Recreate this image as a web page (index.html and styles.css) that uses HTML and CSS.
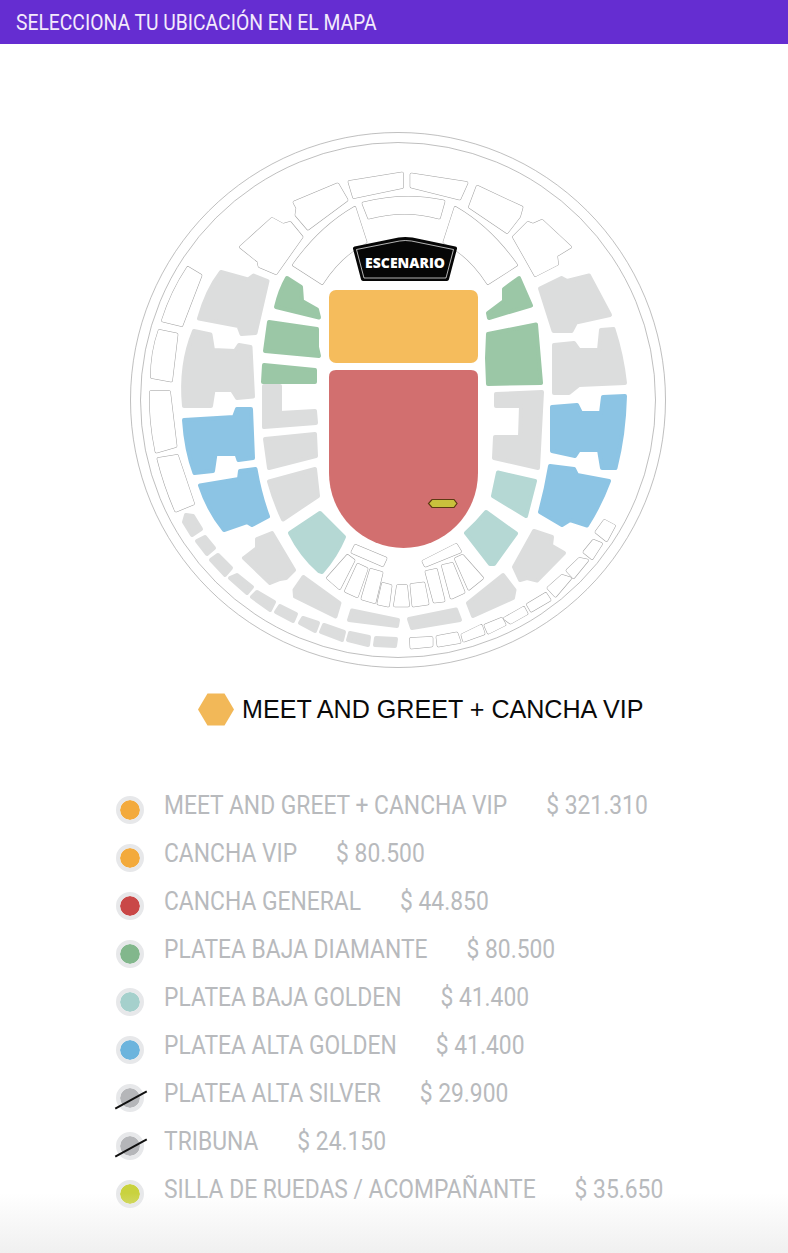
FILE: index.html
```html
<!DOCTYPE html>
<html lang="es">
<head>
<meta charset="utf-8">
<title>Selecciona tu ubicación en el mapa</title>
<link rel="stylesheet" href="styles.css">
</head>
<body>
<header class="topbar"><span class="title">SELECCIONA TU UBICACIÓN EN EL MAPA</span></header>

<svg class="map" viewBox="0 44 788 640" xmlns="http://www.w3.org/2000/svg" aria-label="Mapa del estadio">
  <circle class="ring" cx="398" cy="400" r="267.5"/>
  <circle class="ring" cx="398" cy="400" r="257.5"/>

  <defs>
    <g id="seats">
      <path d="M349.5 182 L402 173.5 L402 187 L354 197Z"/>
      <path d="M294.5 202.5 L337.5 184.5 L346.5 200 L308 228.5 L296.5 215 L297.5 208Z"/>
      <path d="M272 219 L283 225 L290 223 L301.5 237 L276 273 L259.5 266 L258.5 261 L241 247Z"/>
      <path d="M363.5 203.5 Q405 193 443.5 201.5 L439 217.5 Q405 208 369 217.5Z"/>
      <path d="M354.5 208 L365.5 242 Q340 255 322 283 L294 265 Q320 228 354.5 208Z"/>
      <path d="M455.5 208 L444.5 242 Q470 255 488 283 L516 265 Q490 228 455.5 208Z"/>
      <path d="M411.5 174.5 L466.5 183 L459.5 198.5 L411.5 186.5Z"/>
      <path d="M477.5 187 L521.5 207.5 L519 216.5 L507 232 L470 207Z"/>
      <path d="M514 237 L528 223 L533 225 L542 221 L570 247 L556 255.5 L557 264 L535.5 275Z"/>
      <path d="M188 268 L200.5 275.5 L181.5 325 L163 320.5 Q172 292 188 268Z"/>
      <path d="M159.5 331 L176.5 334.5 L171 380.5 L152 377 Q152 352 159.5 331Z"/>
      <path d="M151 392 L169 392 L175.5 446 L156.5 451.5 Q150 420 151 392Z"/>
      <path d="M158.5 459 L177 456 L193 503.5 L176 510.5 Q165 485 158.5 459Z"/>
      <path d="M355.5 546 L385.5 558.5 L382.5 565 L352.5 552Z"/>
      <path d="M347.5 556 L353.5 560.5 L339.5 588 L328 578Z"/>
      <path d="M358 565 L366.5 569 L357 596 L346 591Z"/>
      <path d="M371 570 L381.5 573 L374.5 602 L362.5 598.5Z"/>
      <path d="M383 584 L390.5 586 L388 605.5 L378.5 603.5Z"/>
      <path d="M398 586 L406 586 L408 605.5 L395 605.5Z"/>
      <path d="M411.5 585 L423.5 583.5 L427.5 603.5 L413.5 605.5Z"/>
      <path d="M426.5 572 L436 570 L443.5 600.5 L434.5 601.5Z"/>
      <path d="M443 566 L452 564 L463.5 592 L451.5 597.5Z"/>
      <path d="M456 559 L462.5 556 L482 578 L469 588.5Z"/>
      <path d="M423.5 561.5 L456 545 L460 551.5 L425.5 565.5Z"/>
      <path d="M411 639 L431.5 638 L431.5 645.5 L411.5 647.5Z"/>
      <path d="M437.5 637 L456.5 633.5 L459.5 642 L438.5 645.5Z"/>
      <path d="M462.5 635 L481 626 L483.5 633.5 L464 640.5Z"/>
      <path d="M485.5 625.5 L501.5 619 L504.5 624.5 L488.5 632.5Z"/>
      <path d="M505 618.5 L523.5 608 L526.5 613.5 L510.5 622.5Z"/>
      <path d="M528 604.5 L545.5 594 L549.5 600 L531.5 610.5Z"/>
      <path d="M548.5 588 L562 576 L570 578.5 L555.5 595.5Z"/>
      <path d="M567.5 570.5 L579.5 559 L587 560.5 L573.5 577Z"/>
      <path d="M584.5 552 L593.5 541 L601 544 L592 558Z"/>
      <path d="M596.5 532 L604.5 521 L614 526 L606.5 540Z"/>
    </g>
  </defs>
  <use href="#seats" class="seat-line"/>
  <use href="#seats" class="seat-fill"/>

  <g class="zone grey">
    <path d="M221 272 L248 279.5 L253.5 275.5 L267.5 281 L255.5 333 L241.5 334 L238.5 326 L199 318.5 Q207 290 221 272Z"/>
    <path d="M194 331 L210.5 334.5 L213 350 L235 351 L239 345 L250.5 347 L253 396.5 L237 398 L232 390 L213.5 390 L211 406 L184 406 Q180 365 194 331Z"/>
    <path d="M264 386 L280 386 L280 413 L315 411 L316 423 L264 427Z"/>
    <path d="M265 439 L315 434 L316 456 L269 468Z"/>
    <path d="M269 481.5 L315 469 L318 496 L283 519.5 Q274 500 269 481.5Z"/>
    <path d="M272 533 L294 570 L286 578 L280 579 L270 583 L244 558 L257 548 L257 539Z"/>
    <path d="M303.5 577 L339.5 603 L335.5 616.5 L295 596.5 L294.5 590Z"/>
    <path d="M352 610.5 L398 620 L397 626 L349 620Z"/>
    <path d="M186 515 L193 516 L201 529 L192 535 L184 522Z"/>
    <path d="M197 541 L205 537 L214 548 L207 554Z"/>
    <path d="M211 560 L218 555 L231 568 L225 575Z"/>
    <path d="M230 578 L237 575 L252 587 L247 593Z"/>
    <path d="M252 597 L257 592 L274 602 L270 610Z"/>
    <path d="M276 612 L280 606 L296 614 L293 621Z"/>
    <path d="M300 623 L303 618 L318 623 L315 631Z"/>
    <path d="M321 632 L324 625 L344 632 L342 640Z"/>
    <path d="M348 640 L350 633 L369 637 L368 645Z"/>
    <path d="M375 645 L376 638 L396 639 L395 646Z"/>
    <path d="M589 275.5 L610 315 L576 322.5 L571.5 331 L553.5 331 L540 288.5 L561.5 278 L567 281Z"/>
    <path d="M554 345 L574 343 L579 350 L599 350 L601 330 L613.5 329 Q622 355 625 383 L579 385 L569 393 L554 393Z"/>
    <path d="M496 394 L542 392 L538 468 L494 458 L495 437 L520 437 L521 406 L496 406Z"/>
    <path d="M409 619 L456 609.5 L460 620 L412 628Z"/>
    <path d="M468 603 L503 575 L514.5 590 L513 598 L473 616Z"/>
    <path d="M534 531 L552 537 L551 545.5 L564 553 L537 580.5 L527 578 L520 580 L514 567Z"/>
  </g>
  <g class="zone green">
    <path d="M287 278 L301 287 L302 301 L317 309.5 L319 317.5 L276 307 Q280 290 287 278Z"/>
    <path d="M269 322 L317 329 L317 347 L319 356 L265 351Z"/>
    <path d="M264 365 L315 370 L315 382 L263 382Z"/>
    <path d="M519 278 L531 305.5 L489 318 L488 313 L504 301 L504 289Z"/>
    <path d="M536 324.5 L541 383 L488 384 L487 358 L488 334Z"/>
  </g>
  <g class="zone blue">
    <path d="M184 420 L234 417 L237 409 L251 409 L253 458 L238.5 460 L236.5 454 L215.5 454 L213 471 L194.5 473 Q186 450 184 420Z"/>
    <path d="M200 485.5 L239 479 L240 471 L255.5 469 Q260 495 268 516.5 L252 525 L247 522 L224 530 Q208 510 200 485.5Z"/>
    <path d="M552 407 L577 405 L581 413 L601 413 L603 397 L625 396 Q624 435 615.5 468 L602 468 L599 450 L579 450 L575 456 L552 451Z"/>
    <path d="M550 466 L574 469 L577 475 L609 481 Q600 505 587 525.5 L570 520 L562 525 L540 512 Q546 490 550 466Z"/>
  </g>
  <g class="zone teal">
    <path d="M320 513 L344 537 Q336 556 322 572 L319 571 Q301 555 290 533Z"/>
    <path d="M498 472.5 L535 481 L526 516 L493 496Z"/>
    <path d="M486 512 L516 533.5 L494 564 L490 564 L466 533 Q477 523 486 512Z"/>
  </g>

  <rect class="vip" x="329" y="290" width="149" height="73" rx="7"/>
  <path class="general" d="M336 370 H471 Q478 370 478 377 V473 A74.5 75 0 0 1 329 473 V377 Q329 370 336 370Z"/>
  <path class="pin" d="M432 499.5 H454 L457 503.5 L454 507.5 H432 L428.5 503.5Z"/>

  <path class="stage" d="M355 248.5 L399 239.5 Q405 238.5 412 239.5 L455 248.5 L447 279 H363Z"/>
  <path class="stage-line" d="M356.5 249.5 L399.5 241 Q405 240 411.5 241 L453.5 249.5 L446 278 H364Z"/>
  <text class="stage-text" x="405" y="267.5">ESCENARIO</text>
</svg>

<div class="selected">
  <svg class="hex" viewBox="0 0 38 33" xmlns="http://www.w3.org/2000/svg"><path d="M10.5 0.5 H27.5 L37 16.5 L27.5 32.5 H10.5 L1 16.5Z"/></svg>
  <span>MEET AND GREET + CANCHA VIP</span>
</div>

<ul class="legend">
  <li class="row"><span class="dot meet"></span><span class="label"><span class="name">MEET AND GREET + CANCHA VIP</span><span class="price">$ 321.310</span></span></li>
  <li class="row"><span class="dot meet"></span><span class="label"><span class="name">CANCHA VIP</span><span class="price">$ 80.500</span></span></li>
  <li class="row"><span class="dot red"></span><span class="label"><span class="name">CANCHA GENERAL</span><span class="price">$ 44.850</span></span></li>
  <li class="row"><span class="dot dgreen"></span><span class="label"><span class="name">PLATEA BAJA DIAMANTE</span><span class="price">$ 80.500</span></span></li>
  <li class="row"><span class="dot dteal"></span><span class="label"><span class="name">PLATEA BAJA GOLDEN</span><span class="price">$ 41.400</span></span></li>
  <li class="row"><span class="dot dblue"></span><span class="label"><span class="name">PLATEA ALTA GOLDEN</span><span class="price">$ 41.400</span></span></li>
  <li class="row"><span class="dot dgrey struck"></span><span class="label"><span class="name">PLATEA ALTA SILVER</span><span class="price">$ 29.900</span></span></li>
  <li class="row"><span class="dot dgrey struck"></span><span class="label"><span class="name">TRIBUNA</span><span class="price">$ 24.150</span></span></li>
  <li class="row"><span class="dot lime"></span><span class="label"><span class="name">SILLA DE RUEDAS / ACOMPAÑANTE</span><span class="price">$ 35.650</span></span></li>
</ul>
<div class="fade"></div>
</body>
</html>
```

FILE: styles.css
```css
* { box-sizing: border-box; }
html, body { margin: 0; height: 100%; overflow: hidden; background: #fff; }
body { position: relative; font-family: Roboto, "Liberation Sans", sans-serif; }

.topbar {
  height: 44px;
  padding: 0 16px;
  background: #652dd1;
  color: #f3eafc;
  font-size: 21.5px;
  line-height: 45px;
}
.title {
  display: inline-block;
  transform: scaleX(0.898);
  transform-origin: left center;
  white-space: nowrap;
}

.map { display: block; width: 788px; height: 640px; }
.ring { fill: none; stroke: #a4a4a4; stroke-width: 0.7; }

.seat-line, .seat-fill { stroke-linejoin: round; }
.seat-line { fill: none; stroke: #a0a0a0; stroke-width: 3.6; }
.seat-fill { fill: #fff; stroke: #fff; stroke-width: 2.6; }

.zone path { stroke-width: 4; stroke-linejoin: round; }
.grey path { fill: #dcdddd; stroke: #dcdddd; }
.green path { fill: #9bc7a6; stroke: #9bc7a6; }
.blue path { fill: #8cc4e4; stroke: #8cc4e4; }
.teal path { fill: #b5d8d4; stroke: #b5d8d4; }

.vip { fill: #f5bc5c; }
.general { fill: #d26f6f; }
.pin { fill: #c9c13c; stroke: #5d3a12; stroke-width: 1.2; }

.stage { fill: #060606; stroke: #060606; stroke-width: 4; stroke-linejoin: round; }
.stage-line { fill: none; stroke: #fff; stroke-width: 0.7; stroke-linejoin: round; }
.stage-text {
  fill: #fff;
  font-family: "Open Sans", sans-serif;
  font-size: 14px;
  font-weight: 800;
  text-anchor: middle;
}

.selected {
  display: flex;
  align-items: center;
  gap: 7px;
  height: 34px;
  margin-top: 8px;
  padding-left: 197px;
  color: #0a0a0a;
  font-family: "Liberation Sans", Arial, sans-serif;
  font-size: 25.1px;
}
.hex { width: 38px; height: 33px; flex: none; }
.hex path { fill: #f2b858; }

.legend { list-style: none; margin: 55px 0 0; padding: 0 0 0 116px; }
.row {
  display: flex;
  align-items: center;
  height: 48px;
  color: #b8babd;
  font-size: 25.5px;
}
.label {
  display: inline-block;
  margin-left: 20px;
  transform: scaleX(0.8956);
  transform-origin: left center;
  white-space: nowrap;
}
.price { margin-left: 43.5px; }

.dot {
  position: relative;
  top: 5px;
  flex: none;
  width: 28px;
  height: 28px;
  border: 4px solid #e7e8ea;
  border-radius: 50%;
  background-clip: padding-box;
}
.meet { background-color: #f3aa3c; }
.red { background-color: #c94747; }
.dgreen { background-color: #82b78c; }
.dteal { background-color: #a5d0cc; }
.dblue { background-color: #6cb4dd; }
.dgrey { background-color: #b5b6b9; }
.lime { background-color: #c9d23e; }

.struck::after {
  content: "";
  position: absolute;
  left: -7px;
  top: 11px;
  width: 36px;
  height: 2px;
  background: #111;
  transform: rotate(-29deg);
}

.fade {
  position: absolute;
  left: 0;
  right: 0;
  bottom: 0;
  height: 60px;
  background: linear-gradient(to bottom, rgba(240, 240, 240, 0), #f0f0f0);
  pointer-events: none;
}
```
